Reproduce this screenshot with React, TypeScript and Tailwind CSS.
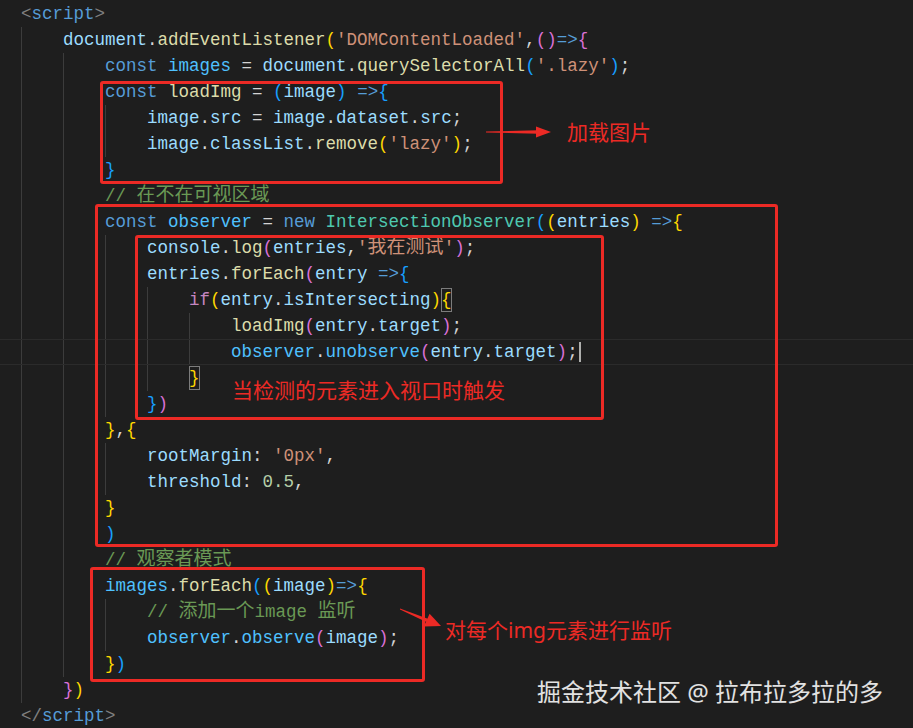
import React from "react";

const C = {
  kw: "text-[#569cd6]",
  v: "text-[#9cdcfe]",
  cv: "text-[#4fc1ff]",
  fn: "text-[#dcdcaa]",
  s: "text-[#ce9178]",
  c: "text-[#6a9955]",
  cls: "text-[#4ec9b0]",
  num: "text-[#b5cea8]",
  ctl: "text-[#c586c0]",
  p: "text-[#d4d4d4]",
  tag: "text-[#808080]",
  b1: "text-[#ffd700]",
  b2: "text-[#da70d6]",
  b3: "text-[#179fff]",
};

type Tok = [string, keyof typeof C, boolean?];
type Line = { indent: number; toks: Tok[]; active?: boolean };

const lines: Line[] = [
  { indent: 0, toks: [["<", "tag"], ["script", "kw"], [">", "tag"]] },
  {
    indent: 1,
    toks: [
      ["document", "v"], [".", "p"], ["addEventListener", "fn"], ["(", "b1"],
      ["'DOMContentLoaded'", "s"], [",", "p"], ["(", "b2"], [")", "b2"], ["=>", "kw"], ["{", "b2"],
    ],
  },
  {
    indent: 2,
    toks: [
      ["const", "kw"], [" ", "p"], ["images", "cv"], [" = ", "p"], ["document", "v"], [".", "p"],
      ["querySelectorAll", "fn"], ["(", "b3"], ["'.lazy'", "s"], [")", "b3"], [";", "p"],
    ],
  },
  {
    indent: 2,
    toks: [
      ["const", "kw"], [" ", "p"], ["loadImg", "fn"], [" = ", "p"], ["(", "b3"], ["image", "v"],
      [")", "b3"], [" ", "p"], ["=>", "kw"], ["{", "b3"],
    ],
  },
  {
    indent: 3,
    toks: [
      ["image", "v"], [".", "p"], ["src", "v"], [" = ", "p"], ["image", "v"], [".", "p"],
      ["dataset", "v"], [".", "p"], ["src", "v"], [";", "p"],
    ],
  },
  {
    indent: 3,
    toks: [
      ["image", "v"], [".", "p"], ["classList", "v"], [".", "p"], ["remove", "fn"], ["(", "b1"],
      ["'lazy'", "s"], [")", "b1"], [";", "p"],
    ],
  },
  { indent: 2, toks: [["}", "b3"]] },
  { indent: 2, toks: [["// 在不在可视区域", "c"]] },
  {
    indent: 2,
    toks: [
      ["const", "kw"], [" ", "p"], ["observer", "cv"], [" = ", "p"], ["new", "kw"], [" ", "p"],
      ["IntersectionObserver", "cls"], ["(", "b3"], ["(", "b1"], ["entries", "v"], [")", "b1"],
      [" ", "p"], ["=>", "kw"], ["{", "b1"],
    ],
  },
  {
    indent: 3,
    toks: [
      ["console", "v"], [".", "p"], ["log", "fn"], ["(", "b2"], ["entries", "v"], [",", "p"],
      ["'我在测试'", "s"], [")", "b2"], [";", "p"],
    ],
  },
  {
    indent: 3,
    toks: [
      ["entries", "v"], [".", "p"], ["forEach", "fn"], ["(", "b2"], ["entry", "v"], [" ", "p"],
      ["=>", "kw"], ["{", "b3"],
    ],
  },
  {
    indent: 4,
    toks: [
      ["if", "ctl"], ["(", "b1"], ["entry", "v"], [".", "p"], ["isIntersecting", "v"], [")", "b1"],
      ["{", "b1", true],
    ],
  },
  {
    indent: 5,
    toks: [
      ["loadImg", "fn"], ["(", "b2"], ["entry", "v"], [".", "p"], ["target", "v"], [")", "b2"], [";", "p"],
    ],
  },
  {
    indent: 5,
    active: true,
    toks: [
      ["observer", "cv"], [".", "p"], ["unobserve", "cv"], ["(", "b2"], ["entry", "v"], [".", "p"],
      ["target", "v"], [")", "b2"], [";", "p"],
    ],
  },
  { indent: 4, toks: [["}", "b1", true]] },
  { indent: 3, toks: [["}", "b3"], [")", "b2"]] },
  { indent: 2, toks: [["}", "b1"], [",", "p"], ["{", "b1"]] },
  {
    indent: 3,
    toks: [["rootMargin", "v"], [": ", "p"], ["'0px'", "s"], [",", "p"]],
  },
  {
    indent: 3,
    toks: [["threshold", "v"], [": ", "p"], ["0.5", "num"], [",", "p"]],
  },
  { indent: 2, toks: [["}", "b1"]] },
  { indent: 2, toks: [[")", "b3"]] },
  { indent: 2, toks: [["// 观察者模式", "c"]] },
  {
    indent: 2,
    toks: [
      ["images", "cv"], [".", "p"], ["forEach", "fn"], ["(", "b3"], ["(", "b1"], ["image", "v"],
      [")", "b1"], ["=>", "kw"], ["{", "b1"],
    ],
  },
  { indent: 3, toks: [["// 添加一个image 监听", "c"]] },
  {
    indent: 3,
    toks: [
      ["observer", "cv"], [".", "p"], ["observe", "cv"], ["(", "b2"], ["image", "v"], [")", "b2"], [";", "p"],
    ],
  },
  { indent: 2, toks: [["}", "b1"], [")", "b3"]] },
  { indent: 1, toks: [["}", "b2"], [")", "b1"]] },
  { indent: 0, toks: [["</", "tag"], ["script", "kw"], [">", "tag"]] },
];

// CJK runs get a slightly larger size, like the editor's fallback font
const renderText = (text: string) =>
  text.split(/([\u4e00-\u9fff]+)/).map((part, i) =>
    /[\u4e00-\u9fff]/.test(part) ? (
      <span key={i} className="text-[19px]">
        {part}
      </span>
    ) : (
      part
    )
  );

const CodeLine = ({ line }: { line: Line }) => (
  <div
    className={
      line.active
        ? "flex h-[26px] items-center pl-[21px] whitespace-pre border-y border-[#2b2b2b]"
        : "flex h-[26px] items-center pl-[21px] whitespace-pre"
    }
  >
    {Array.from({ length: line.indent }).map((_, i) => (
      <span key={i} className="self-stretch w-[42px] shrink-0 border-l border-[#3c3c3c]" />
    ))}
    <span className="flex items-center">
      {line.toks.map(([text, color, boxed], i) =>
        boxed ? (
          <span
            key={i}
            className={`${C[color]} inline-flex items-center h-[24px] outline outline-[#7c7c7c] -outline-offset-1`}
          >
            {text}
          </span>
        ) : (
          <span key={i} className={C[color]}>
            {renderText(text)}
          </span>
        )
      )}
      {line.active && <span className="ml-px w-[2px] h-[20px] bg-[#aeafad]" />}
    </span>
  </div>
);

const RedBox = ({ className }: { className: string }) => (
  <div className={`absolute border-[3px] border-[#ec2a25] rounded-[3px] ${className}`} />
);

const Note = ({ className, children }: { className: string; children: React.ReactNode }) => (
  <div
    className={`absolute leading-[26px] ${className}`}
    style={{ fontFamily: '"Noto Sans", "Noto Sans CJK SC", sans-serif' }}
  >
    {children}
  </div>
);

export default function App() {
  return (
    <div className="relative w-[913px] h-[728px] overflow-hidden bg-[#1e1e1e]">
      <div className="pt-px font-['Liberation_Mono','Noto_Sans_CJK_SC',monospace] text-[17.5px]">
        {lines.map((line, idx) => (
          <CodeLine key={idx} line={line} />
        ))}
      </div>

      {/* annotation boxes */}
      <RedBox className="left-[100px] top-[81px] w-[403px] h-[103px]" />
      <RedBox className="left-[95px] top-[204px] w-[683px] h-[343px]" />
      <RedBox className="left-[135px] top-[235px] w-[469px] h-[185px]" />
      <RedBox className="left-[90px] top-[567px] w-[335px] h-[115px]" />

      <svg className="absolute inset-0 w-[913px] h-[728px] pointer-events-none" viewBox="0 0 913 728">
        <polygon points="486,131.5 538,130.3 538,133.7 486,132.5" fill="#ec2a25" />
        <polygon points="536,126.5 551,132 536,137.5" fill="#ec2a25" />
        <polygon points="400,608.6 427.8,618.7 426.4,621.9 400,609.4" fill="#ec2a25" />
        <polygon points="429.6,613.8 441,626 423.8,626.4" fill="#ec2a25" />
      </svg>

      <Note className="left-[567px] top-[119px] text-[21px] text-[#ec2a25]">加载图片</Note>
      <Note className="left-[232px] top-[377px] text-[21px] text-[#ec2a25]">当检测的元素进入视口时触发</Note>
      <Note className="left-[445px] top-[617px] text-[21px] text-[#ec2a25]">对每个img元素进行监听</Note>
      <Note className="left-[537px] top-[678px] text-[24px] text-[#e2e2e2] leading-[28px]">
        掘金技术社区 @ 拉布拉多拉的多
      </Note>
    </div>
  );
}
